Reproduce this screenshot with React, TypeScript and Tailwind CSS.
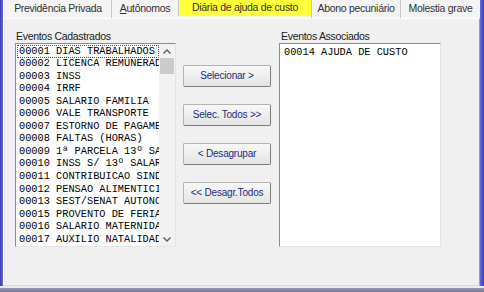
import React from 'react';

const cadastrados = [
    '00001 DIAS TRABALHADOS',
    '00002 LICENCA REMUNERADA',
    '00003 INSS',
    '00004 IRRF',
    '00005 SALARIO FAMILIA',
    '00006 VALE TRANSPORTE',
    '00007 ESTORNO DE PAGAMENTO',
    '00008 FALTAS (HORAS)',
    '00009 1ª PARCELA 13º SALARIO',
    '00010 INSS S/ 13º SALARIO',
    '00011 CONTRIBUICAO SINDICAL',
    '00012 PENSAO ALIMENTICIA',
    '00013 SEST/SENAT AUTONOMO',
    '00015 PROVENTO DE FERIAS',
    '00016 SALARIO MATERNIDADE',
    '00017 AUXILIO NATALIDADE',
];

const tabs = [
    { label: 'Previdência Privada', w: 'w-[106px]', active: false },
    { label: 'Autônomos', w: 'w-[67px]', active: false },
    { label: 'Diária de ajuda de custo', w: 'w-[133px]', active: true },
    { label: 'Abono pecuniário', w: 'w-[89px]', active: false },
    { label: 'Molestia grave', w: 'w-[80px]', active: false },
];

const Chevron: React.FC<{ up?: boolean }> = ({ up }) => (
    <svg width="8" height="5" viewBox="0 0 8 5" className="block">
        <path
            d={up ? 'M0.5 4.5 L4 1 L7.5 4.5' : 'M0.5 0.5 L4 4 L7.5 0.5'}
            fill="none"
            stroke="#5a5a5a"
            strokeWidth="1.4"
        />
    </svg>
);

const WinButton: React.FC<{ label: string }> = ({ label }) => (
    <button className="h-[22px] w-[88px] flex items-center justify-center rounded-[2px] border border-[#b4b4b4] border-r-[#7c7c7c] border-b-[#7c7c7c] bg-gradient-to-b from-[#f8f8f8] to-[#e4e4e4] text-[10px] tracking-[-0.2px] text-[#1f2a80] leading-none">
        {label}
    </button>
);

const App: React.FC = () => {
    return (
        <div className="w-[484px] h-[292px] flex flex-col bg-[#4848c8] overflow-hidden" style={{ fontFamily: '"Liberation Sans", Arial, sans-serif' }}>
            <div className="flex flex-1 min-h-0">
                {/* left window edge */}
                <div className="w-[3px] bg-gradient-to-r from-[#3a3ab8] to-[#6a6ad8]" />

                <div className="flex-1 flex flex-col bg-[#f0f0f0]">
                    {/* tab strip */}
                    <div className="h-[18px] flex items-stretch pl-[2px] bg-[#f4f4f4]">
                        {tabs.map((t, i) => (
                            <div
                                key={t.label}
                                className={`${t.w} flex items-center justify-center text-[10.5px] text-[#303030] tracking-[-0.3px] ${i > 0 ? 'border-l border-[#c8c8c8]' : ''} ${t.active ? 'bg-[#ffff3a] h-[16px]' : ''}`}
                            >
                                {t.label === 'Autônomos' ? (
                                    <span><span className="underline">A</span>utônomos</span>
                                ) : (
                                    t.label
                                )}
                            </div>
                        ))}
                    </div>

                    {/* tab body */}
                    <div className="flex-1 flex items-start pl-[11px] pt-[11px] border-t border-l border-white border-r border-r-[#a0a0a0] border-b border-b-[#d8d8d8]">
                        {/* Eventos Cadastrados */}
                        <div className="flex flex-col w-[161px]">
                            <span className="text-[10.5px] text-[#202020] leading-[13px] pl-[1px] tracking-[-0.3px]">Eventos Cadastrados</span>
                            <div className="h-[204px] flex border border-[#8c8c8c] border-r-[#e4e4e4] border-b-[#e4e4e4] bg-white">
                                <div className="flex-1 min-w-0 overflow-hidden pl-[1px] pt-[1px]">
                                    {cadastrados.map((item, i) => (
                                        <div
                                            key={item}
                                            className={`h-[12.55px] flex items-center whitespace-nowrap text-[10.3px] text-black pl-[1px] ${i === 0 ? 'border border-dotted border-[#555]' : 'border border-transparent'}`}
                                            style={{ fontFamily: '"Liberation Mono", "Courier New", monospace' }}
                                        >
                                            {item}
                                        </div>
                                    ))}
                                </div>
                                <div className="w-[16px] flex flex-col bg-[#f2f2f2]">
                                    <div className="h-[14px] flex items-center justify-center">
                                        <Chevron up />
                                    </div>
                                    <div className="h-[16px] mx-[1px] bg-[#cbcbcb]" />
                                    <div className="flex-1" />
                                    <div className="h-[14px] flex items-center justify-center">
                                        <Chevron />
                                    </div>
                                </div>
                            </div>
                        </div>

                        {/* buttons */}
                        <div className="flex flex-col gap-[17px] ml-[7px] mt-[35px]">
                            <WinButton label="Selecionar >" />
                            <WinButton label="Selec. Todos >>" />
                            <WinButton label="< Desagrupar" />
                            <WinButton label="<< Desagr.Todos" />
                        </div>

                        {/* Eventos Associados */}
                        <div className="flex flex-col w-[162px] ml-[8px]">
                            <span className="text-[10.5px] text-[#202020] leading-[13px] pl-[2px] tracking-[-0.3px]">Eventos Associados</span>
                            <div className="h-[204px] border border-[#8c8c8c] border-r-[#e4e4e4] border-b-[#e4e4e4] bg-white pl-[4px] pt-[2px]">
                                <div
                                    className="h-[12.5px] flex items-center whitespace-nowrap text-[10.3px] text-black"
                                    style={{ fontFamily: '"Liberation Mono", "Courier New", monospace' }}
                                >
                                    00014 AJUDA DE CUSTO
                                </div>
                            </div>
                        </div>
                    </div>
                </div>

                {/* right window edge */}
                <div className="w-[4px] bg-gradient-to-r from-[#6a6ad8] to-[#3a3ab8]" />
            </div>

            {/* bottom window edge */}
            <div className="h-[6px] flex flex-col">
                <div className="h-[2px] bg-[#e8eef0]" />
                <div className="flex-1 bg-gradient-to-b from-[#9a98b0] to-[#7a7898]" />
            </div>
        </div>
    );
};

export default App;
